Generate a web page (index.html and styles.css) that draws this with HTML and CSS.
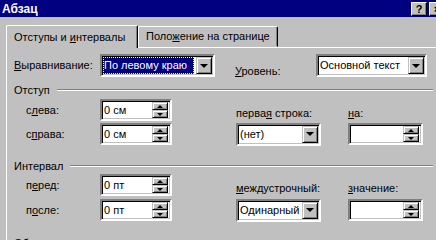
FILE: index.html
```html
<!DOCTYPE html>
<html lang="ru">
<head>
  <meta charset="UTF-8">
  <title>Абзац</title>
  <link rel="stylesheet" href="styles.css">
</head>
<body>

  <div class="titlebar">
    <span class="title">Абзац</span>
    <div class="title-buttons">
      <span class="tbtn">?</span>
      <span class="tbtn">×</span>
    </div>
  </div>

  <div class="tabs">
    <div class="tab active">Отступы и <u>и</u>нтервалы</div>
    <div class="tab">Поло<u>ж</u>ение на странице</div>
  </div>

  <div class="panel">

    <div class="row-top">
      <label class="lbl-align"><u>В</u>ыравнивание:</label>
      <div class="combo combo-align">
        <span class="combo-text selected">По левому краю</span>
        <span class="drop"><i class="arr-down"></i></span>
      </div>
      <label class="lbl-level"><u>У</u>ровень:</label>
      <div class="combo combo-level">
        <span class="combo-text">Основной текст</span>
        <span class="drop"><i class="arr-down"></i></span>
      </div>
    </div>

    <div class="group-head head-indent"><span>Отступ</span><div class="rule"></div></div>

    <div class="group-grid grid-indent">
      <label>с<u>л</u>ева:</label>
      <div class="spin"><span class="spin-text">0 см</span><span class="spin-btns"><b><i class="arr-up"></i></b><b><i class="arr-down"></i></b></span></div>
      <span></span>
      <label class="lbl-end">перва<u>я</u> строка:</label>
      <span></span>
      <label class="lbl-end"><u>н</u>а:</label>

      <label>с<u>п</u>рава:</label>
      <div class="spin"><span class="spin-text">0 см</span><span class="spin-btns"><b><i class="arr-up"></i></b><b><i class="arr-down"></i></b></span></div>
      <span></span>
      <div class="combo"><span class="combo-text">(нет)</span><span class="drop"><i class="arr-down"></i></span></div>
      <span></span>
      <div class="spin"><span class="spin-text"></span><span class="spin-btns"><b><i class="arr-up"></i></b><b><i class="arr-down"></i></b></span></div>
    </div>

    <div class="group-head head-interval"><span>Интервал</span><div class="rule"></div></div>

    <div class="group-grid grid-interval">
      <label>п<u>е</u>ред:</label>
      <div class="spin"><span class="spin-text">0 пт</span><span class="spin-btns"><b><i class="arr-up"></i></b><b><i class="arr-down"></i></b></span></div>
      <span></span>
      <label class="lbl-end"><u>м</u>еждустрочный:</label>
      <span></span>
      <label class="lbl-end"><u>з</u>начение:</label>

      <label>п<u>о</u>сле:</label>
      <div class="spin"><span class="spin-text">0 пт</span><span class="spin-btns"><b><i class="arr-up"></i></b><b><i class="arr-down"></i></b></span></div>
      <span></span>
      <div class="combo"><span class="combo-text">Одинарный</span><span class="drop"><i class="arr-down"></i></span></div>
      <span></span>
      <div class="spin"><span class="spin-text"></span><span class="spin-btns"><b><i class="arr-up"></i></b><b><i class="arr-down"></i></b></span></div>
    </div>

    <div class="group-head head-sample"><span>Образец</span><div class="rule"></div></div>

  </div>

</body>
</html>
```

FILE: styles.css
```css
body {
  margin: 0;
  padding: 0;
  width: 436px;
  height: 240px;
  overflow: hidden;
  background-color: #c0c0c0;
  font-family: 'Liberation Sans', Arial, sans-serif;
  font-size: 11px;
  color: #000;
}

u {
  text-decoration: underline;
  text-underline-offset: 1px;
}

/* title bar */

.titlebar {
  height: 17px;
  background-color: #000080;
  display: flex;
  justify-content: space-between;
  align-items: center;
  padding-left: 2px;
}

.title {
  color: #fff;
  font-weight: bold;
  font-size: 12px;
}

.title-buttons {
  display: flex;
  gap: 2px;
  margin-right: -9px;
}

.tbtn {
  width: 14px;
  height: 12px;
  background: #c0c0c0;
  border: 1px solid;
  border-color: #fff #000 #000 #fff;
  box-shadow: inset -1px -1px 0 #808080;
  font-weight: bold;
  font-size: 11px;
  line-height: 12px;
  text-align: center;
}

/* tabs */

.tabs {
  display: flex;
  align-items: flex-end;
  margin-top: 8px;
  padding-left: 6px;
}

.tab {
  height: 19px;
  line-height: 18px;
  padding: 0 7px;
  border: 1px solid;
  border-color: #fff #000 transparent #fff;
  border-radius: 2px 2px 0 0;
  box-shadow: inset -1px 0 0 #808080;
}

.tab.active {
  position: relative;
  z-index: 1;
  height: 22px;
  line-height: 22px;
  width: 116px;
  margin-bottom: -1px;
  background-color: #c0c0c0;
  border-bottom: 0;
}

/* panel */

.panel {
  margin-left: 6px;
  border-left: 1px solid #fff;
  border-top: 1px solid #fff;
  padding: 6px 3px 0 7px;
}

.row-top {
  display: flex;
  align-items: flex-start;
}

.lbl-align {
  width: 86px;
  padding-top: 5px;
}

.lbl-level {
  width: 81px;
  margin-left: 20px;
  padding-top: 11px;
}

.combo {
  height: 17px;
  display: flex;
  background: #fff;
  border: 2px solid;
  border-color: #808080 #fff #fff #808080;
  box-shadow: inset 1px 1px 0 #000, inset -1px -1px 0 #c0c0c0;
  padding: 1px 1px 1px 1px;
}

.combo-align {
  width: 109px;
}

.combo-level {
  width: 105px;
}

.combo-text {
  flex: 1;
  line-height: 17px;
  padding-left: 1px;
  white-space: nowrap;
  overflow: hidden;
}

.combo-text.selected {
  background-color: #000080;
  color: #fff;
  outline: 1px dotted #ffff80;
  outline-offset: -1px;
  margin-right: 2px;
}

.drop,
.spin-btns b {
  display: flex;
  align-items: center;
  justify-content: center;
  background: #c0c0c0;
  border: 1px solid;
  border-color: #c0c0c0 #000 #000 #c0c0c0;
  box-shadow: inset 1px 1px 0 #fff, inset -1px -1px 0 #808080;
  box-sizing: border-box;
}

.drop {
  width: 16px;
  height: 17px;
}

.arr-down {
  width: 0;
  height: 0;
  border-left: 4px solid transparent;
  border-right: 4px solid transparent;
  border-top: 4px solid #000;
}

.arr-up {
  width: 0;
  height: 0;
  border-left: 3px solid transparent;
  border-right: 3px solid transparent;
  border-bottom: 3px solid #000;
}

.spin-btns .arr-down {
  border-left-width: 3px;
  border-right-width: 3px;
  border-top-width: 3px;
}

/* groups */

.group-head {
  display: flex;
  align-items: center;
  height: 14px;
}

.group-head .rule {
  flex: 1;
  margin-left: 7px;
  border-top: 1px solid #808080;
  border-bottom: 1px solid #fff;
}

.head-indent {
  margin-top: 6px;
}

.head-interval {
  margin-top: 15px;
}

.head-sample {
  margin-top: 16px;
}

.group-grid {
  display: grid;
  grid-template-columns: 74px 72px 64px 85px 27px 75px;
  grid-auto-rows: 20px;
  padding-left: 12px;
  align-items: center;
}

.grid-indent {
  margin-top: 3px;
  row-gap: 4px;
}

.grid-interval {
  margin-top: 2px;
  row-gap: 5px;
}

.lbl-end {
  align-self: end;
  line-height: 12px;
  margin-bottom: 1px;
}

.spin {
  height: 16px;
  display: flex;
  background: #fff;
  border: 2px solid;
  border-color: #808080 #fff #fff #808080;
  box-shadow: inset 1px 1px 0 #000, inset -1px -1px 0 #c0c0c0;
  padding: 1px 2px 1px 1px;
}

.spin-text {
  flex: 1;
  line-height: 16px;
  padding-left: 1px;
}

.spin-btns {
  display: flex;
  flex-direction: column;
  width: 16px;
}

.spin-btns b {
  height: 8px;
}

.group-grid .combo {
  height: 17px;
}
```
